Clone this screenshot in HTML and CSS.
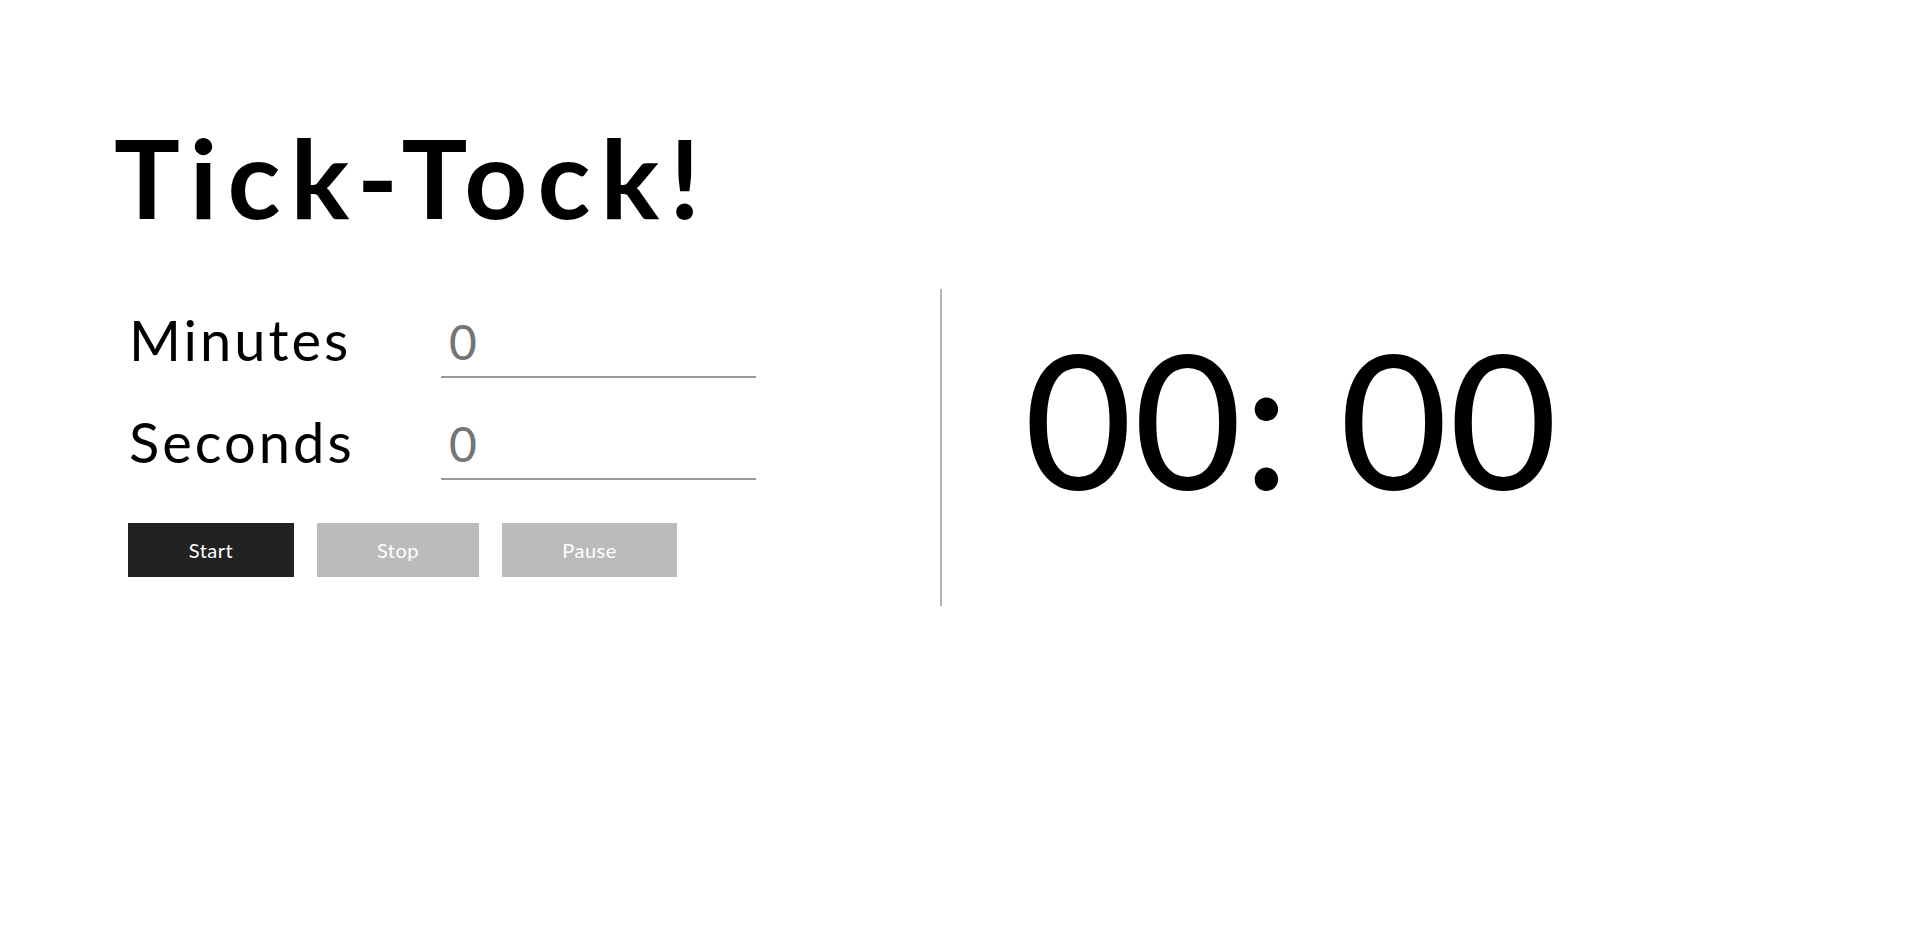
FILE: index.html
```html
<!DOCTYPE html>
<html lang="en">
<head>
<meta charset="utf-8">
<title>Tick-Tock!</title>
<link rel="stylesheet" href="styles.css">
</head>
<body>
<main class="page">
  <h1 class="title">Tick-Tock!</h1>
  <section class="timer-layout">
    <div class="controls">
      <div class="field">
        <label class="field-label" for="minutes">Minutes</label>
        <input class="field-input" id="minutes" type="number" placeholder="0">
      </div>
      <div class="field">
        <label class="field-label" for="seconds">Seconds</label>
        <input class="field-input" id="seconds" type="number" placeholder="0">
      </div>
      <div class="buttons">
        <button class="btn btn-start" type="button">Start</button>
        <button class="btn btn-stop" type="button">Stop</button>
        <button class="btn btn-pause" type="button">Pause</button>
      </div>
    </div>
    <div class="display">
      <div class="clock">00: 00</div>
    </div>
  </section>
</main>
</body>
</html>
```

FILE: styles.css
```css
* {
  box-sizing: border-box;
}

html, body {
  margin: 0;
  padding: 0;
  background: #ffffff;
}

body {
  font-family: "Lato", "Noto Sans", sans-serif;
  color: #000;
}

.page {
  padding: 121px 114px 0 114px;
}

.title {
  margin: 0;
  font-size: 110px;
  font-weight: 700;
  line-height: 1;
  letter-spacing: 10px;
}

.timer-layout {
  display: flex;
  margin-top: 58px;
}

.controls {
  width: 826px;
  padding: 18px 0 0 15px;
  display: flex;
  flex-direction: column;
}

.field {
  display: flex;
  align-items: flex-end;
  height: 71px;
  margin-bottom: 31px;
}

.field-label {
  width: 312px;
  font-size: 56px;
  line-height: 1;
  letter-spacing: 3px;
  margin-bottom: 10px;
}

.field-input {
  width: 315px;
  height: 71px;
  border: none;
  border-bottom: 2px solid #999999;
  padding: 0 8px;
  font-family: inherit;
  font-size: 48px;
  outline: none;
  background: transparent;
  -moz-appearance: textfield;
}

.field-input::-webkit-outer-spin-button,
.field-input::-webkit-inner-spin-button {
  -webkit-appearance: none;
  margin: 0;
}

.field-input::placeholder {
  color: #757575;
}

.buttons {
  display: flex;
  gap: 23px;
  margin-top: 12px;
  margin-left: -1px;
}

.btn {
  height: 54px;
  border: none;
  color: #ffffff;
  font-family: inherit;
  font-size: 20px;
  letter-spacing: 0.5px;
  cursor: pointer;
  padding: 0;
}

.btn-start {
  width: 166px;
  background: #222222;
}

.btn-stop {
  width: 162px;
  background: #bbbbbb;
}

.btn-pause {
  width: 175px;
  background: #bbbbbb;
}

.display {
  border-left: 2px solid #b3b3b3;
  height: 317px;
  padding: 35px 0 0 82px;
}

.clock {
  font-size: 187px;
  line-height: 1;
  letter-spacing: 1px;
  white-space: nowrap;
}
```
